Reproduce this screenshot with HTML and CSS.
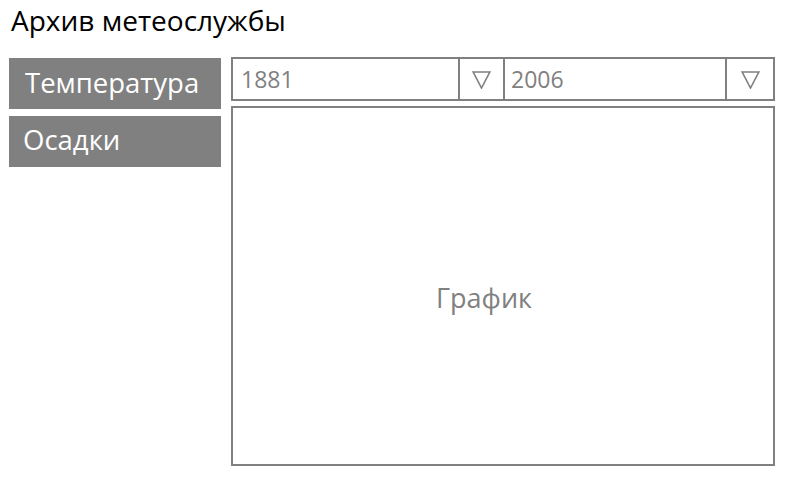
FILE: index.html
```html
<!DOCTYPE html>
<html lang="ru">
<head>
<meta charset="utf-8">
<link rel="stylesheet" href="styles.css">
</head>
<body>
<h1 class="title">Архив метеослужбы</h1>
<div class="main">
  <div class="side">
    <div class="btn">Температура</div>
    <div class="btn btn-b">Осадки</div>
  </div>
  <div class="content">
    <div class="selects">
      <div class="select select-1">
        <span class="value">1881</span>
        <span class="arrow arrow-1"><svg width="19" height="18" viewBox="0 0 19 18"><path d="M1.2 1 L17.8 1 L9.5 17 Z" fill="none" stroke="#808080" stroke-width="1.6" stroke-linejoin="miter"/></svg></span>
      </div>
      <div class="select select-2">
        <span class="value">2006</span>
        <span class="arrow arrow-2"><svg width="19" height="18" viewBox="0 0 19 18"><path d="M1.2 1 L17.8 1 L9.5 17 Z" fill="none" stroke="#808080" stroke-width="1.6" stroke-linejoin="miter"/></svg></span>
      </div>
    </div>
    <div class="chart">График</div>
  </div>
</div>
</body>
</html>
```
FILE: styles.css
```css
* { box-sizing: border-box; }
html, body { margin: 0; padding: 0; background: #fff; }
body { font-family: "Open Sans", "Noto Sans", sans-serif; width: 785px; height: 479px; overflow: hidden; }
.title { margin: 0; padding: 2px 0 0 11px; font-size: 28px; font-weight: normal; color: #000; line-height: 36px; height: 57px; }
.main { display: flex; padding-left: 9px; gap: 10px; }
.side { width: 212px; display: flex; flex-direction: column; gap: 7px; padding-top: 1px; }
.btn { height: 51px; background: #808080; color: #fff; font-size: 27.5px; line-height: 50px; padding-left: 16px; }
.btn-b { padding-left: 14px; line-height: 48px; }
.content { width: 544px; display: flex; flex-direction: column; gap: 5px; }
.selects { display: flex; height: 44px; border: 2px solid #808080; }
.select { display: flex; color: #808080; }
.select-1 { width: 270px; }
.select-2 { flex: 1; border-left: 2px solid #808080; }
.value { flex: 1; font-size: 23px; line-height: 40px; padding-left: 8px; }
.select-2 .value { padding-left: 6px; }
.arrow { border-left: 2px solid #808080; display: flex; align-items: center; justify-content: center; padding-top: 1px; }
.arrow-1 { width: 45px; }
.arrow-2 { width: 48px; }
.chart { height: 360px; border: 2px solid #808080; display: flex; align-items: center; justify-content: center; color: #808080; font-size: 27px; padding-top: 22px; padding-right: 38px; }
```
